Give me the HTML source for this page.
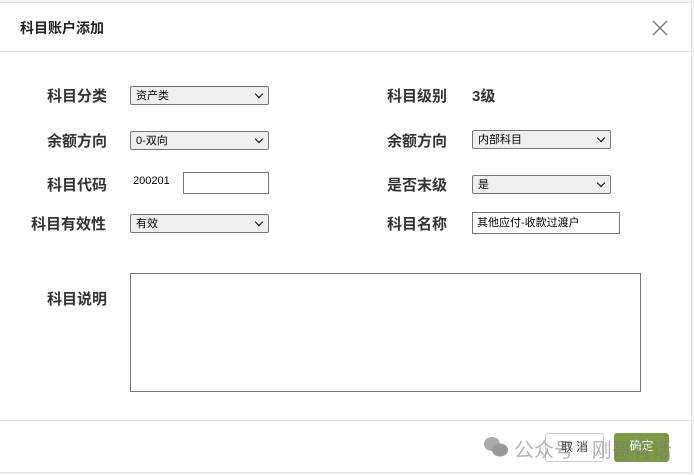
<!DOCTYPE html>
<html><head><meta charset="utf-8"><style>
*{margin:0;padding:0;box-sizing:border-box}
body{width:694px;height:475px;background:#f4f4f4;font-family:"Liberation Sans","Noto Sans CJK SC",sans-serif;position:relative;overflow:hidden}
.dlg{position:absolute;left:0;top:2px;width:692px;height:471px;background:#fff;border:1px solid #e0e0e0;border-left:none}
.hd{position:absolute;left:0;top:0;width:100%;height:49px;border-bottom:1px solid #ddd}
.hd span{position:absolute;left:20px;top:15px;font-size:14px;font-weight:bold;color:#222}
.x{position:absolute;left:652px;top:17px}
.lbl{position:absolute;font-size:15px;font-weight:bold;color:#333;white-space:nowrap}
.sel{position:absolute;height:19px;border:1px solid #777;border-radius:2px;background:#efefef;font-size:11px;padding-left:5px;line-height:18px;color:#000}
.sel:after{content:"";position:absolute;right:6px;top:4px;width:5px;height:5px;border-right:1.6px solid #000;border-bottom:1.6px solid #000;transform:rotate(45deg)}
.inp{position:absolute;height:22px;border:1px solid #777;background:#fff;font-size:11px;padding-left:4px;line-height:20px}
.ft{position:absolute;left:0;top:420px;width:692px;border-top:1px solid #ddd}
.btn{position:absolute;height:29px;border-radius:3px;font-size:12px;text-align:center;line-height:27px}
.wm{position:absolute;font-size:20px;color:rgba(120,120,120,.55);white-space:nowrap}
</style></head><body>
<div class="dlg">
<div class="hd"><span>科目账户添加</span>
<svg class="x" width="16" height="16" viewBox="0 0 16 16"><path d="M1 1L15 15M15 1L1 15" stroke="#777" stroke-width="1.4"/></svg></div>
</div>
<div class="lbl" style="left:47px;top:85px">科目分类</div>
<div class="sel" style="left:130px;top:86px;width:139px">资产类</div>
<div class="lbl" style="left:387px;top:85px">科目级别</div>
<div class="lbl" style="left:472px;top:85px">3级</div>

<div class="lbl" style="left:47px;top:130px">余额方向</div>
<div class="sel" style="left:130px;top:131px;width:139px">0-双向</div>
<div class="lbl" style="left:387px;top:130px">余额方向</div>
<div class="sel" style="left:472px;top:130px;width:139px">内部科目</div>

<div class="lbl" style="left:47px;top:174px">科目代码</div>
<div style="position:absolute;left:133px;top:175px;font-size:11px">200201</div>
<div class="inp" style="left:183px;top:172px;width:86px"></div>
<div class="lbl" style="left:387px;top:174px">是否末级</div>
<div class="sel" style="left:472px;top:175px;width:139px">是</div>

<div class="lbl" style="left:31px;top:213px">科目有效性</div>
<div class="sel" style="left:130px;top:214px;width:139px">有效</div>
<div class="lbl" style="left:387px;top:213px">科目名称</div>
<div class="inp" style="left:472px;top:212px;width:148px">其他应付-收款过渡户</div>

<div class="lbl" style="left:47px;top:288px">科目说明</div>
<div style="position:absolute;left:130px;top:273px;width:511px;height:119px;border:1px solid #777"></div>

<div class="ft"></div>
<div class="btn" style="left:545px;top:433px;width:59px;border:1px solid #ccc;background:#fff;color:#333">取 消</div>
<div class="btn" style="left:614px;top:433px;width:55px;background:#7b9a45;color:#fff">确定</div>
<svg style="position:absolute;left:483px;top:436px" width="26" height="22" viewBox="0 0 26 22"><ellipse cx="9" cy="8" rx="8" ry="7" fill="#aaa"/><ellipse cx="17" cy="14" rx="8" ry="6.5" fill="#999"/></svg>
<div class="wm" style="left:514px;top:434px">公众号 · 刚哥有话</div>
</body></html>
